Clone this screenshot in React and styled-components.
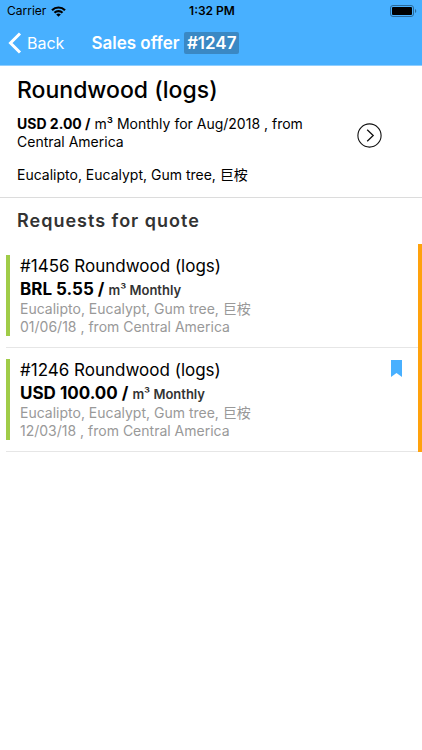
import styled, { createGlobalStyle } from 'styled-components';

const GlobalStyle = createGlobalStyle`
  * {
    box-sizing: border-box;
  }

  body {
    margin: 0;
    background: #fff;
    color: #000;
    font-family: Inter, 'Noto Sans CJK SC', sans-serif;
  }
`;

const Header = styled.header`
  background: #48b0ff;
  border-bottom: 1px solid #8fceff;
`;

const StatusBar = styled.div`
  display: grid;
  grid-template-columns: 1fr auto 1fr;
  align-items: center;
  height: 22px;
  padding: 0 5px 0 7px;
  font-size: 12px;
  line-height: 22px;
`;

const Carrier = styled.div`
  display: flex;
  align-items: center;
  gap: 5px;
`;

const Clock = styled.time`
  font-weight: 600;
`;

const BatteryIcon = styled.svg`
  justify-self: end;
`;

const NavBar = styled.nav`
  display: flex;
  align-items: center;
  height: 43px;
  padding: 0 8px 2px;
  color: #fff;
`;

const BackButton = styled.button`
  display: flex;
  align-items: center;
  gap: 5px;
  padding: 0;
  border: 0;
  background: none;
  color: inherit;
  font: inherit;
  font-size: 16px;
  cursor: pointer;
`;

const NavTitle = styled.h1`
  margin: 0 0 0 27px;
  font-size: 17px;
  font-weight: 600;
  line-height: 22px;
`;

const OfferNumber = styled.span`
  display: inline-block;
  padding: 0 3px;
  border-radius: 2px;
  background: #3a88c4;
`;

const Offer = styled.section`
  display: flex;
  align-items: center;
  padding: 8px 40px 13px 17px;
  border-bottom: 1px solid #dcdcdc;
`;

const OfferBody = styled.div`
  flex: 1;
  font-size: 14px;
  line-height: 18px;
`;

const OfferTitle = styled.h2`
  margin: 0 0 9px;
  font-size: 23px;
  font-weight: 500;
  line-height: 32px;
`;

const OfferText = styled.p`
  max-width: 300px;
  margin: 0 0 15px;

  &:last-child {
    margin: 0;
  }
`;

const OpenButton = styled.button`
  display: flex;
  padding: 12px 0 0;
  border: 0;
  background: none;
  color: #111;
  cursor: pointer;
`;

const SectionTitle = styled.h3`
  margin: 0;
  padding: 11px 17px;
  color: #333;
  font-size: 18px;
  font-weight: 600;
  letter-spacing: 1px;
  line-height: 24px;
`;

const QuoteList = styled.ul`
  margin: 0;
  padding: 0 0 0 6px;
  border-right: 4px solid #ffa20d;
  list-style: none;
`;

const QuoteItem = styled.li`
  display: flex;
  align-items: flex-start;
  justify-content: space-between;
  padding: 11px 16px 11px 0;
  border-bottom: 1px solid #e6e6e6;
`;

const QuoteBody = styled.div`
  padding-left: 10px;
  border-left: 4px solid #a0cc48;
`;

const QuoteTitle = styled.h4`
  margin: 0;
  font-size: 17px;
  font-weight: 400;
  line-height: 23px;
`;

const Price = styled.div`
  font-size: 17px;
  font-weight: 700;
  line-height: 22px;
`;

const Unit = styled.span`
  color: #333;
  font-size: 13px;
  font-weight: 600;
  line-height: 1;
`;

const QuoteMeta = styled.div`
  color: #999;
  font-size: 14px;
  line-height: 18px;
`;

const BookmarkIcon = styled.svg`
  margin-top: 1px;
`;

const quotes = [
  { id: 1456, price: 'BRL 5.55', date: '01/06/18', saved: false },
  { id: 1246, price: 'USD 100.00', date: '12/03/18', saved: true },
];

const species = 'Eucalipto, Eucalypt, Gum tree, 巨桉';

function App() {
  return (
    <>
      <GlobalStyle />
      <Header>
        <StatusBar>
          <Carrier>
            Carrier
            <svg width="15" height="11" viewBox="0 0 15 11" aria-hidden="true">
              <g fill="none" stroke="#000" strokeWidth="2.2">
                <path d="M1 4.2a9.2 9.2 0 0 1 13 0" />
                <path d="M3.5 6.8a5.7 5.7 0 0 1 8 0" />
              </g>
              <path d="M7.5 10.8 5.2 8.500a3.300 3.300 0 0 1 4.600 0z" />
            </svg>
          </Carrier>
          <Clock>1:32 PM</Clock>
          <BatteryIcon width="27" height="12" viewBox="0 0 27 12" aria-hidden="true">
            <rect x=".5" y=".5" width="23" height="11" rx="2.5" fill="none" stroke="#2b6a99" />
            <rect x="2" y="2" width="20" height="8" rx="1" />
            <path d="M25 4a2.2 2.2 0 0 1 0 4z" fill="#2b6a99" />
          </BatteryIcon>
        </StatusBar>
        <NavBar>
          <BackButton type="button">
            <svg width="14" height="22" viewBox="0 0 14 22" aria-hidden="true">
              <path d="M12 1.5 2.5 11l9.5 9.5" fill="none" stroke="#fff" strokeWidth="3" />
            </svg>
            Back
          </BackButton>
          <NavTitle>
            Sales offer <OfferNumber>#1247</OfferNumber>
          </NavTitle>
        </NavBar>
      </Header>

      <main>
        <Offer>
          <OfferBody>
            <OfferTitle>Roundwood (logs)</OfferTitle>
            <OfferText>
              <strong>USD 2.00 /</strong> m³ Monthly for Aug/2018 , from Central America
            </OfferText>
            <OfferText>{species}</OfferText>
          </OfferBody>
          <OpenButton type="button" aria-label="Open offer">
            <svg width="25" height="25" viewBox="0 0 25 25" fill="none" stroke="currentColor" aria-hidden="true">
              <circle cx="12.5" cy="12.5" r="11.6" strokeWidth="1.1" />
              <path d="m10.2 6.8 6 5.7-6 5.7" strokeWidth="1.3" />
            </svg>
          </OpenButton>
        </Offer>

        <SectionTitle>Requests for quote</SectionTitle>
        <QuoteList>
          {quotes.map((quote) => (
            <QuoteItem key={quote.id}>
              <QuoteBody>
                <QuoteTitle>#{quote.id} Roundwood (logs)</QuoteTitle>
                <Price>
                  {quote.price} / <Unit>m³ Monthly</Unit>
                </Price>
                <QuoteMeta>{species}</QuoteMeta>
                <QuoteMeta>{quote.date} , from Central America</QuoteMeta>
              </QuoteBody>
              {quote.saved && (
                <BookmarkIcon width="11" height="17" viewBox="0 0 11 17" role="img" aria-label="Saved">
                  <path d="M0 0h11v17l-5.5-4L0 17z" fill="#48b0ff" />
                </BookmarkIcon>
              )}
            </QuoteItem>
          ))}
        </QuoteList>
      </main>
    </>
  );
}

export default App;
